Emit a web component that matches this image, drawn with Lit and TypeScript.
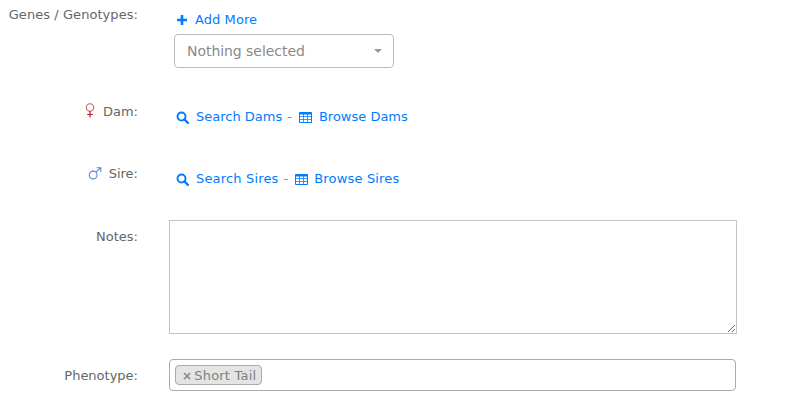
import { LitElement, html, css } from "lit";
import { customElement } from "lit/decorators.js";

const searchIcon = html`<svg class="ic" width="13" height="13" viewBox="0 0 13 13"><circle cx="5.5" cy="5.5" r="4" fill="none" stroke="currentColor" stroke-width="1.9"/><path d="M8.4 8.4L12 12" stroke="currentColor" stroke-width="2.2" stroke-linecap="round"/></svg>`;
const tableIcon = html`<svg class="ic tbl" width="13" height="11" viewBox="0 0 13 11"><path d="M.5.5h12v10H.5z" fill="none" stroke="currentColor"/><path d="M.5 1.5h12" stroke="currentColor" stroke-width="2"/><path d="M1 4.5h11M1 7.5h11M4.5 2v8M8.5 2v8" stroke="currentColor" stroke-opacity=".75"/></svg>`;

@customElement("app-root")
export class AppRoot extends LitElement {
  static styles = css`
    :host { display: block; width: 789px; height: 409px; overflow: hidden; background: #fff;
      font-family: "DejaVu Sans", Verdana, sans-serif; font-size: 13px; color: #666; }
    .row { display: flex; }
    .label { width: 138px; margin-right: 31px; flex: none; text-align: right; line-height: 20px; color: #666; white-space: nowrap; padding-top: 1px; }
    .genes .label { padding-top: 5px; letter-spacing: .06px; }
    .genes { height: 68px; }
    .dam { margin-top: 33px; }
    .sire { margin-top: 36px; }
    .notes { margin-top: 31px; }
    .pheno { margin-top: 25px; }
    .notes .label, .pheno .label { padding-top: 7px; }
    .links { padding: 6px 0 0 7px; line-height: 20px; display: flex; align-items: center; color: #888; white-space: nowrap; }
    a { color: #007bff; text-decoration: none; display: inline-flex; align-items: center; }
    .ic { flex: none; margin-right: 7px; }
    .tbl { margin-left: 2px; margin-right: 7px; }
    .sep { margin: 0 5px; }
    .sire .links a { letter-spacing: .17px; }
    .sire .sep { margin-right: 4px; }
    .sire .tbl { margin-left: 3px; margin-right: 6px; }
    .col { padding-left: 5px; }
    .add-link { line-height: 20px; margin: 10px 0 0 3px; height: 20px; display: flex; letter-spacing: .08px; }
    .add-link svg { margin-right: 8px; }
    .select { box-sizing: border-box; width: 220px; height: 34px; margin-top: 4px; border: 1px solid #bbb; border-radius: 4px;
      display: flex; align-items: center; justify-content: space-between; padding: 0 11px 0 12px; color: #8a8a8a; font-size: 14px; letter-spacing: -.05px; }
    .caret { width: 0; height: 0; border-left: 4.5px solid transparent; border-right: 4.5px solid transparent; border-top: 4px solid #999; }
    textarea { box-sizing: border-box; display: block; width: 568px; height: 114px; margin: 0; border: 1px solid #c4c4c4; outline: none; background: #fff; }
    .tags { box-sizing: border-box; width: 567px; height: 32px; border: 1px solid #aaa; border-radius: 4px; padding: 5px; display: flex; align-items: flex-start; }
    .tag { box-sizing: border-box; height: 20px; width: 87px; border: 1px solid #aaa; border-radius: 4px; background: #e4e4e4; color: #808080; line-height: 20px; padding-left: 6px; white-space: nowrap; letter-spacing: .2px; }
    .x { font-size: 12px; margin-right: 2px; font-weight: bold; color: #888; }
    .venus { vertical-align: -2px; margin-right: 8px; }
    .mars { vertical-align: -2px; margin-right: 7px; }
  `;

  render() {
    return html`
      <div class="row genes">
        <div class="label">Genes / Genotypes:</div>
        <div class="col">
          <a class="add-link" href="#"><svg class="ic" width="10" height="10" viewBox="0 0 10 10"><path d="M5 0v10M0 5h10" stroke="currentColor" stroke-width="2.6"/></svg>Add More</a>
          <div class="select"><span>Nothing selected</span><span class="caret"></span></div>
        </div>
      </div>
      <div class="row dam">
        <div class="label"><svg class="ic venus" width="10" height="15" viewBox="0 0 10 15"><circle cx="5" cy="4.5" r="3.7" fill="none" stroke="#c0605f" stroke-width="1.1"/><path d="M5 8v6.5M2.2 11.5h5.6" stroke="#d01030" stroke-width="1.2"/></svg>Dam:</div>
        <div class="links"><a href="#">${searchIcon}Search Dams</a><span class="sep">-</span><a href="#">${tableIcon}Browse Dams</a></div>
      </div>
      <div class="row sire">
        <div class="label"><svg class="ic mars" width="14" height="13" viewBox="0 0 14 13"><circle cx="5.2" cy="8" r="3.9" fill="none" stroke="#4f86e0" stroke-width="1.1"/><path d="M8 5.2L12.5 .8M8.6 .7h4.2v4.2" fill="none" stroke="#4f86e0" stroke-width="1.1"/></svg>Sire:</div>
        <div class="links"><a href="#">${searchIcon}Search Sires</a><span class="sep">-</span><a href="#">${tableIcon}Browse Sires</a></div>
      </div>
      <div class="row notes">
        <div class="label">Notes:</div>
        <textarea></textarea>
      </div>
      <div class="row pheno">
        <div class="label">Phenotype:</div>
        <div class="tags"><span class="tag"><span class="x">×</span>Short Tail</span></div>
      </div>
    `;
  }
}
